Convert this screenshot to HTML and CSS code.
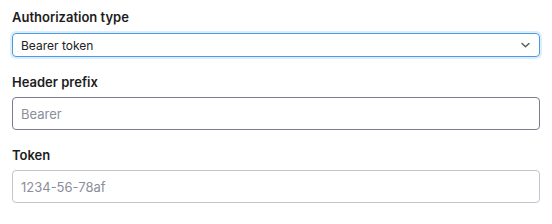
FILE: index.html
```html
<!DOCTYPE html>
<html lang="en">
<head>
    <meta charset="UTF-8">
    <title>Auth</title>
    <link rel="stylesheet" href="styles.css">
</head>
<body>

    <div class="form">

        <!-- authorization type -->
        <div class="field">
            <label class="label label-select">Authorization type</label>
            <div class="select focus">
                <span>Bearer token</span>
                <svg class="chevron" width="9" height="6" viewBox="0 0 9 6">
                    <path d="M1 1.4 L4.5 4.8 L8 1.4" fill="none" stroke="#5a5a5a" stroke-width="1.4" stroke-linecap="round" stroke-linejoin="round"/>
                </svg>
            </div>
        </div>

        <!-- header prefix -->
        <div class="field">
            <label class="label">Header prefix</label>
            <input type="text" class="input input-dark" placeholder="Bearer">
        </div>

        <!-- token -->
        <div class="field">
            <label class="label">Token</label>
            <input type="text" class="input" placeholder="1234-56-78af">
        </div>

    </div>

</body>
</html>
```

FILE: styles.css
```css
body{
    margin: 0;
    background-color: #fff;
    font-family: Inter, "Noto Sans", sans-serif;
    color: #1d1d21;
}

.form{
    padding: 7px 12px 0 12px;
    display: flex;
    flex-direction: column;
    gap: 15px;
}

.field{
    display: flex;
    flex-direction: column;
}

.label{
    font-size: 13px;
    font-weight: 600;
    line-height: 20px;
    margin-bottom: 5px;
}

.label-select{
    margin-bottom: 6px;
}

.select{
    height: 24px;
    box-sizing: border-box;
    border: 1px solid #4a9be6;
    border-radius: 4px;
    display: flex;
    align-items: center;
    justify-content: space-between;
    padding: 0 9px 0 8px;
    font-size: 12px;
    color: #222;
}

.focus{
    box-shadow: 0 0 0 2px rgba(74, 155, 230, 0.18);
}

.input{
    height: 33px;
    box-sizing: border-box;
    border: 1px solid #c5c5cf;
    border-radius: 4px;
    padding: 0 8px;
    font-family: Inter, "Noto Sans", sans-serif;
    font-size: 13px;
    outline: 0;
}

.input::placeholder{
    color: #8b8e9c;
}

.input-dark{
    border-color: #7b7f8d;
}
```
